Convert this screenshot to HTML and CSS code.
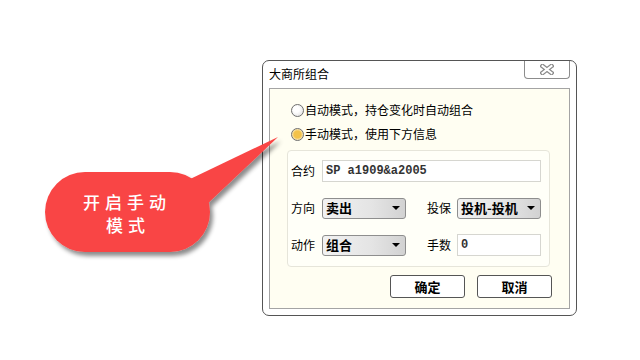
FILE: index.html
```html
<!DOCTYPE html>
<html lang="zh">
<head>
    <meta charset="UTF-8">
    <title>大商所组合</title>
    <link rel="stylesheet" href="styles.css">
</head>
<body>
    <div class="stage">
        <div class="window">
            <div class="titlebar">
                <span class="title">大商所组合</span>
                <div class="close">
                    <svg width="14" height="11" viewBox="0 0 14 11">
                        <path d="M2.5 2 L11.5 9 M11.5 2 L2.5 9" stroke="#8a8a8a" stroke-width="4.5" stroke-linecap="square"/>
                        <path d="M2.5 2 L11.5 9 M11.5 2 L2.5 9" stroke="#ffffff" stroke-width="2" stroke-linecap="square"/>
                    </svg>
                </div>
            </div>
            <div class="panel">
                <div class="radio-row"><span class="radio"></span>自动模式，持仓变化时自动组合</div>
                <div class="radio-row"><span class="radio on"></span>手动模式，使用下方信息</div>
                <div class="group">
                    <div class="field-row">
                        <span class="lbl">合约</span>
                        <div class="input wide">SP a1909&amp;a2005</div>
                    </div>
                    <div class="field-row">
                        <span class="lbl">方向</span>
                        <div class="select">卖出<i class="arrow"></i></div>
                        <span class="lbl second">投保</span>
                        <div class="select">投机-投机<i class="arrow"></i></div>
                    </div>
                    <div class="field-row">
                        <span class="lbl">动作</span>
                        <div class="select">组合<i class="arrow"></i></div>
                        <span class="lbl second">手数</span>
                        <div class="input">0</div>
                    </div>
                </div>
                <div class="buttons">
                    <button class="btn">确定</button>
                    <button class="btn">取消</button>
                </div>
            </div>
        </div>

        <svg class="callout" width="300" height="270" viewBox="0 0 300 270">
            <defs>
                <filter id="shade" x="-10%" y="-10%" width="130%" height="140%">
                    <feDropShadow dx="3" dy="4" stdDeviation="2" flood-color="#000" flood-opacity="0.45"/>
                </filter>
            </defs>
            <g filter="url(#shade)" fill="#f94545">
                <path d="M186 181 L278 137 L204 207 Z"/>
                <rect x="45" y="172" width="165" height="80" rx="40" ry="40"/>
            </g>
            <text class="bubble-text" x="127" y="209" text-anchor="middle">开启手动</text>
            <text class="bubble-text" x="128" y="232" text-anchor="middle">模式</text>
        </svg>
    </div>
</body>
</html>
```

FILE: styles.css
```css
body {
    margin: 0;
    background-color: #ffffff;
    font-family: "Noto Sans CJK SC", "Liberation Sans", sans-serif;
    font-size: 12px;
    color: #000000;
}
.stage {
    position: relative;
    width: 640px;
    height: 360px;
    padding: 60px 0 0 262px;
    box-sizing: border-box;
}
.window {
    width: 315px;
    height: 256px;
    box-sizing: border-box;
    border: 1px solid #555555;
    border-radius: 7px;
    background-color: #ffffff;
    display: flex;
    flex-direction: column;
}
.titlebar {
    height: 27px;
    display: flex;
    justify-content: space-between;
    align-items: flex-start;
}
.title {
    padding: 6px 0 0 6px;
    line-height: 14px;
}
.close {
    width: 46px;
    height: 18px;
    margin-right: 6px;
    box-sizing: border-box;
    border: 1px solid #8c8c8c;
    border-top: none;
    border-radius: 0 0 4px 4px;
    display: flex;
    align-items: center;
    justify-content: center;
}
.panel {
    flex: 1;
    margin: 0 6px 6px 6px;
    border: 1px solid #a4a4a4;
    background-color: #fffef2;
    padding: 9px 0 0 0;
    display: flex;
    flex-direction: column;
}
.radio-row {
    height: 24px;
    display: flex;
    align-items: center;
    padding-left: 21px;
    line-height: 14px;
}
.radio {
    width: 13px;
    height: 13px;
    box-sizing: border-box;
    border: 1px solid #6e6e6e;
    border-radius: 50%;
    background: radial-gradient(circle at 40% 40%, #ffffff 30%, #dadada 100%);
    margin-right: 1px;
}
.radio.on {
    background: radial-gradient(circle, #f3c24a 45%, #f7dc96 62%, #ffffff 100%);
}
.group {
    margin: 4px 19px 0 17px;
    height: 117px;
    box-sizing: border-box;
    border: 1px solid #e6e5da;
    border-radius: 4px;
    background-color: #fffff8;
    padding: 9px 7px 0 3px;
    display: flex;
    flex-direction: column;
    gap: 15px;
}
.field-row {
    height: 22px;
    display: flex;
    align-items: center;
}
.lbl {
    width: 31px;
    line-height: 14px;
}
.lbl.second {
    width: 30px;
    margin-left: 21px;
}
.input {
    width: 84px;
    height: 22px;
    box-sizing: border-box;
    border: 1px solid #d6d6d0;
    background-color: #ffffff;
    padding-left: 3px;
    font-family: "Liberation Mono", monospace;
    font-weight: bold;
    font-size: 12px;
    line-height: 20px;
    color: #333333;
}
.input.wide {
    width: 219px;
}
.select {
    width: 84px;
    height: 21px;
    box-sizing: border-box;
    border: 1px solid #8e8e8e;
    border-radius: 3px;
    background: linear-gradient(to right, #f2f2f2 0%, #e4e4e4 60%, #d2d2d2 100%);
    padding: 0 5px 0 3px;
    display: flex;
    align-items: center;
    justify-content: space-between;
    font-weight: bold;
    font-size: 13px;
    line-height: 14px;
}
.arrow {
    width: 0;
    height: 0;
    border-left: 4px solid transparent;
    border-right: 4px solid transparent;
    border-top: 4px solid #000000;
}
.buttons {
    margin: 8px 17px 0 0;
    display: flex;
    justify-content: flex-end;
    gap: 12px;
}
.btn {
    width: 75px;
    height: 23px;
    border: 1px solid #555555;
    border-radius: 3px;
    background-color: #ffffff;
    font-family: "Noto Sans CJK SC", sans-serif;
    font-weight: bold;
    font-size: 13px;
    padding: 0;
    color: #000000;
}
.callout {
    position: absolute;
    left: 0;
    top: 0;
}
.bubble-text {
    font-family: "Noto Sans CJK SC", sans-serif;
    font-size: 17px;
    font-weight: 500;
    letter-spacing: 5px;
    fill: #ffffff;
}
```
